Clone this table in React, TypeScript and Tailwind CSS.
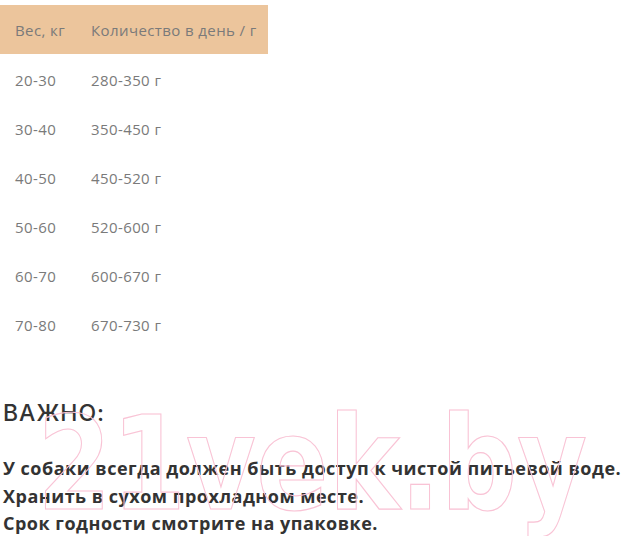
import React from "react";

const rows = [
  ["20-30", "280-350 г"],
  ["30-40", "350-450 г"],
  ["40-50", "450-520 г"],
  ["50-60", "520-600 г"],
  ["60-70", "600-670 г"],
  ["70-80", "670-730 г"],
];

export default function App() {
  return (
    <div className="relative w-[624px] h-[536px] bg-white overflow-hidden">
      <div className="pt-[5px]">
        <table className="w-[268px] border-collapse text-[15px] tracking-[0.4px] text-[#7a7a7a] [font-family:'Open_Sans',sans-serif]">
          <thead>
            <tr className="bg-[#ecc59c] h-[49px]">
              <th className="font-normal text-left pl-[15px] w-[91px] pt-[2px]">Вес, кг</th>
              <th className="font-normal text-left pt-[2px]">Количество в день / г</th>
            </tr>
          </thead>
          <tbody>
            {rows.map((r) => (
              <tr key={r[0]} className="h-[49px]">
                <td className="pl-[15px] pt-[3px]">{r[0]}</td>
                <td className="pt-[3px]">{r[1]}</td>
              </tr>
            ))}
          </tbody>
        </table>
      </div>
      <div className="mt-[51px] pl-[3px] text-[#333] [font-family:'Open_Sans',sans-serif]">
        <div className="text-[23px] leading-[28px] font-medium tracking-[1px] [font-family:Inter,sans-serif]">ВАЖНО:</div>
        <div className="mt-[28px] text-[18px] leading-[27.5px] font-bold tracking-[0.5px] whitespace-nowrap">
          <div>У собаки всегда должен быть доступ к чистой питьевой воде.</div>
          <div>Хранить в сухом прохладном месте.</div>
          <div>Срок годности смотрите на упаковке.</div>
        </div>
      </div>
      <svg className="absolute left-0 top-0 pointer-events-none" width="624" height="536">
        <text
          x="37"
          y="509"
          textLength="550"
          lengthAdjust="spacingAndGlyphs"
          fontFamily="'DejaVu Sans', sans-serif"
          fontWeight="bold"
          fontSize="130"
          fill="none"
          stroke="#f9c3d5"
          strokeWidth="1.2"
        >
          21vek.by
        </text>
      </svg>
    </div>
  );
}
